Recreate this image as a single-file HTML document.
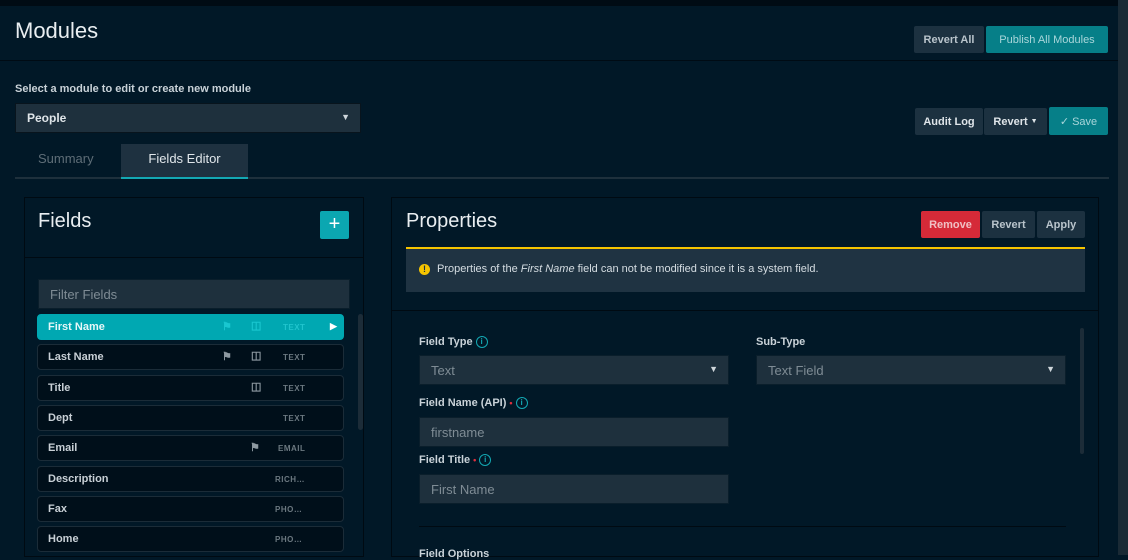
<!DOCTYPE html>
<html><head><style>
*{box-sizing:border-box;margin:0;padding:0}
body{width:1128px;height:555px;overflow:hidden;background:#011827;font-family:"Liberation Sans",sans-serif;position:relative;color:#e6ecef}
.a{position:absolute}
.btn{position:absolute;font-size:11px;font-weight:bold;color:#b9c4cb;display:flex;align-items:center;justify-content:center;border-radius:2px;background:#1c3140}
.inp{position:absolute;background:#1e303d;border:1px solid #0a1e2b;font-size:13px;color:#7f8c95;padding-left:11px;display:flex;align-items:center}
.lbl{position:absolute;font-size:11px;font-weight:bold;color:#c9d2d8}
.row{position:absolute;left:37px;width:307px;height:26px;border:1px solid #1b2c38;border-radius:4px;background:#000f1a;font-size:11px;font-weight:bold;color:#c8d0d6;display:flex;align-items:center;padding-left:10px}
.t{position:absolute;left:245px;font-size:8px;letter-spacing:.5px;color:#6b7880}
.ic{position:absolute;font-size:11px;color:#8d99a1}
.info{display:inline-block;width:12px;height:12px;border:1.3px solid #13a8b3;border-radius:50%;color:#13a8b3;font-size:8px;text-align:center;line-height:10px;vertical-align:middle;margin-left:3px}
.req{color:#e0303d;font-size:9px;margin-left:3px}
</style></head><body>
<div class="a" style="left:0;top:0;width:1128px;height:6px;background:#000b14"></div>
<div class="a" style="left:0;top:6px;width:1120px;height:55px;background:#011827;border-bottom:1px solid #000b14"></div>
<div class="a" style="left:1118px;top:0;width:10px;height:555px;background:#1a2a35"></div>
<div class="a" style="left:15px;top:18px;font-size:22px;color:#e9eef1">Modules</div>
<div class="btn" style="left:914px;top:26px;width:70px;height:27px">Revert All</div>
<div class="btn" style="left:986px;top:26px;width:122px;height:27px;background:#067f88;color:#a9d6da;font-weight:normal">Publish All Modules</div>
<div class="a" style="left:15px;top:83px;font-size:11px;font-weight:bold;color:#c9d2d8">Select a module to edit or create new module</div>
<div class="inp" style="left:15px;top:103px;width:346px;height:30px;color:#dfe5e9;font-weight:bold;font-size:12px;border-color:#08141d">People<span class="a" style="right:10px;top:8px;font-size:9px;color:#cfd6db">▼</span></div>
<div class="btn" style="left:915px;top:108px;width:68px;height:27px;color:#dfe5e9">Audit Log</div>
<div class="btn" style="left:984px;top:108px;width:63px;height:27px;color:#dfe5e9">Revert <span style="font-size:7px;margin-left:3px">▼</span></div>
<div class="btn" style="left:1049px;top:107px;width:59px;height:28px;background:#067f88;color:#a9d6da;font-weight:normal">✓ Save</div>
<div class="a" style="left:38px;top:151px;font-size:13px;color:#5e6d77">Summary</div>
<div class="a" style="left:121px;top:144px;width:127px;height:34px;background:#1e3140;font-size:13px;color:#e0e6ea;text-align:center;line-height:30px">Fields Editor</div>
<div class="a" style="left:15px;top:177px;width:1094px;height:2px;background:#1e303c"></div>
<div class="a" style="left:121px;top:177px;width:127px;height:2px;background:#13a8b3"></div>
<!-- fields panel -->
<div class="a" style="left:24px;top:197px;width:340px;height:360px;border:1px solid #000a12;background:#011827"></div>
<div class="a" style="left:25px;top:257px;width:338px;height:1px;background:#000a12"></div>
<div class="a" style="left:38px;top:210px;font-size:20px;color:#e9eef1">Fields</div>
<div class="a" style="left:320px;top:211px;width:29px;height:28px;background:#0ba7b1;border-radius:2px;color:#fff;font-size:20px;text-align:center;line-height:27px">+</div>
<div class="inp" style="left:38px;top:279px;width:312px;height:30px;font-size:13px;color:#7f8c95">Filter Fields</div>
<div class="a" style="left:358px;top:314px;width:5px;height:116px;background:#1c2c38;border-radius:3px"></div>
<div class="row" style="top:314px;background:#00a8b2;border-color:#00a8b2;color:#e6f7f8">First Name<span class="ic" style="left:184px;top:5px;color:#19c7d0">⚑</span><span class="ic" style="left:213px;top:4px;color:#19c7d0">◫</span><span class="t" style="color:#20c4cd">TEXT</span><span class="a" style="left:292px;top:6px;font-size:9px;color:#fff">▶</span></div>
<div class="row" style="top:344px">Last Name<span class="ic" style="left:184px;top:5px">⚑</span><span class="ic" style="left:213px;top:4px">◫</span><span class="t">TEXT</span></div>
<div class="row" style="top:375px">Title<span class="ic" style="left:213px;top:4px">◫</span><span class="t">TEXT</span></div>
<div class="row" style="top:405px">Dept<span class="t">TEXT</span></div>
<div class="row" style="top:435px">Email<span class="ic" style="left:212px;top:5px">⚑</span><span class="t" style="left:240px">EMAIL</span></div>
<div class="row" style="top:466px">Description<span class="t" style="left:237px">RICH…</span></div>
<div class="row" style="top:496px">Fax<span class="t" style="left:237px">PHO…</span></div>
<div class="row" style="top:526px">Home<span class="t" style="left:237px">PHO…</span></div>
<!-- properties -->
<div class="a" style="left:391px;top:197px;width:708px;height:360px;border:1px solid #000a12"></div>
<div class="a" style="left:392px;top:310px;width:706px;height:1px;background:#000a12"></div>
<div class="a" style="left:406px;top:210px;font-size:20px;color:#e9eef1">Properties</div>
<div class="btn" style="left:921px;top:211px;width:59px;height:27px;background:#d52a38;color:#f0c0c4">Remove</div>
<div class="btn" style="left:982px;top:211px;width:53px;height:27px">Revert</div>
<div class="btn" style="left:1037px;top:211px;width:48px;height:27px">Apply</div>
<div class="a" style="left:406px;top:247px;width:679px;height:45px;background:#1f3342;border-top:2px solid #f5c400;font-size:11px;color:#d5dde2;padding:14px 0 0 31px">Properties of the <i>First Name</i> field can not be modified since it is a system field.</div>
<div class="a" style="left:419px;top:264px;width:11px;height:11px;border-radius:50%;background:#f5c400;color:#1f3342;font-size:9px;font-weight:bold;text-align:center;line-height:11px">!</div>
<div class="a" style="left:1080px;top:328px;width:4px;height:126px;background:#1c2c38;border-radius:2px"></div>
<div class="lbl" style="left:419px;top:336px">Field Type<span class="info">i</span></div>
<div class="inp" style="left:419px;top:355px;width:310px;height:30px">Text<span class="a" style="right:10px;top:8px;font-size:9px;color:#cfd6db">▼</span></div>
<div class="lbl" style="left:756px;top:336px">Sub-Type</div>
<div class="inp" style="left:756px;top:355px;width:310px;height:30px">Text Field<span class="a" style="right:10px;top:8px;font-size:9px;color:#cfd6db">▼</span></div>
<div class="lbl" style="left:419px;top:397px">Field Name (API)<span class="req">•</span><span class="info">i</span></div>
<div class="inp" style="left:419px;top:417px;width:310px;height:30px">firstname</div>
<div class="lbl" style="left:419px;top:454px">Field Title<span class="req">•</span><span class="info">i</span></div>
<div class="inp" style="left:419px;top:474px;width:310px;height:30px">First Name</div>
<div class="a" style="left:419px;top:526px;width:647px;height:1px;background:#000a12"></div>
<div class="lbl" style="left:419px;top:548px">Field Options</div>
</body></html>
